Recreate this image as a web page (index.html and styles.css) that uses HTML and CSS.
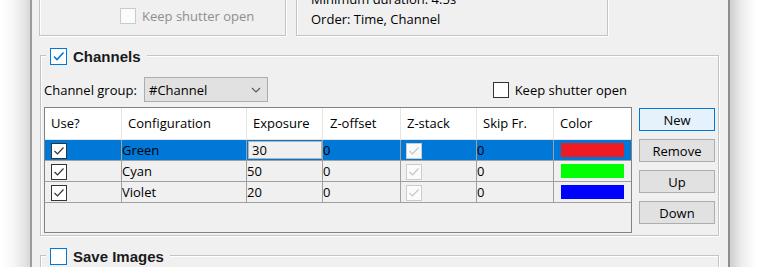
FILE: index.html
```html
<!DOCTYPE html>
<html lang="en">
<head>
  <meta charset="UTF-8">
  <title>Multi-D Acquisition</title>
  <link rel="stylesheet" href="styles.css">
</head>
<body>
  <div class="window">
    <div class="top-row">
      <div class="etched box-left">
        <label class="check-row disabled">
          <span class="cb cb-disabled"></span>Keep shutter open
        </label>
      </div>
      <div class="etched box-right">
        <div>Minimum duration: 4.5s</div>
        <div>Order: Time, Channel</div>
      </div>
    </div>

    <div class="etched group channels">
      <div class="group-title">
        <span class="cb cb-focus"><svg viewBox="0 0 13 13"><polyline points="2,6.5 5,9.5 11.5,2.5"/></svg></span>Channels
      </div>
      <div class="channels-grid">
        <div class="combo-row">
          <span class="combo-label">Channel group:</span>
          <div class="combo">
            <span>#Channel</span>
            <svg class="chevron" viewBox="0 0 10 6"><polyline points="1,1 5,5 9,1"/></svg>
          </div>
          <label class="check-row keep">
            <span class="cb"></span>Keep shutter open
          </label>
        </div>

        <div class="table">
          <div class="tr th">
            <div>Use?</div>
            <div>Configuration</div>
            <div>Exposure</div>
            <div class="zo">Z-offset</div>
            <div>Z-stack</div>
            <div>Skip Fr.</div>
            <div>Color</div>
          </div>
          <div class="tr td selected">
            <div class="c-use"><span class="cb"><svg viewBox="0 0 12 12"><polyline points="1.5,6 4.5,9 10.5,2.5"/></svg></span></div>
            <div class="c-text">Green</div>
            <div class="c-edit"><span class="edit">30</span></div>
            <div class="c-text">0</div>
            <div class="c-stack"><span class="cb cb-disabled"><svg viewBox="0 0 12 12"><polyline points="1.5,6 4.5,9 10.5,2.5"/></svg></span></div>
            <div class="c-text">0</div>
            <div class="c-color"><span class="swatch red"></span></div>
          </div>
          <div class="tr td">
            <div class="c-use"><span class="cb"><svg viewBox="0 0 12 12"><polyline points="1.5,6 4.5,9 10.5,2.5"/></svg></span></div>
            <div class="c-text">Cyan</div>
            <div class="c-text">50</div>
            <div class="c-text">0</div>
            <div class="c-stack"><span class="cb cb-disabled"><svg viewBox="0 0 12 12"><polyline points="1.5,6 4.5,9 10.5,2.5"/></svg></span></div>
            <div class="c-text">0</div>
            <div class="c-color"><span class="swatch green"></span></div>
          </div>
          <div class="tr td">
            <div class="c-use"><span class="cb"><svg viewBox="0 0 12 12"><polyline points="1.5,6 4.5,9 10.5,2.5"/></svg></span></div>
            <div class="c-text">Violet</div>
            <div class="c-text">20</div>
            <div class="c-text">0</div>
            <div class="c-stack"><span class="cb cb-disabled"><svg viewBox="0 0 12 12"><polyline points="1.5,6 4.5,9 10.5,2.5"/></svg></span></div>
            <div class="c-text">0</div>
            <div class="c-color"><span class="swatch blue"></span></div>
          </div>
        </div>

        <div class="buttons">
          <button class="btn btn-default">New</button>
          <button class="btn">Remove</button>
          <button class="btn">Up</button>
          <button class="btn">Down</button>
        </div>
      </div>
    </div>

    <div class="etched group save">
      <div class="group-title">
        <span class="cb cb-focus"></span>Save Images
      </div>
    </div>
  </div>
</body>
</html>
```

FILE: styles.css
```css
* {
  box-sizing: border-box;
}
body {
  margin: 0;
  height: 267px;
  overflow: hidden;
  font-family: "Open Sans", sans-serif;
  font-size: 13px;
  color: #000;
  background: linear-gradient(to right, #fff 0, #f8f8f8 12px, #e6e6e6 24px, #d8d8d8 30px,
    #d8d8d8 730px, #d0d0d0 731px, #ececec 741px, #fff 756px);
}
.window {
  margin-left: 30px;
  width: 700px;
  height: 267px;
  border-left: 2px solid #9c9c9c;
  border-right: 2px solid #8e8e8e;
  background: #f0f0f0;
  padding-left: 7px;
  overflow: hidden;
}
.etched {
  border: 1px solid #c4c4c4;
  box-shadow: inset 1px 1px 0 #fff, 1px 1px 0 #fff;
}

/* top row, mostly scrolled out of view */
.top-row {
  display: flex;
  gap: 10px;
  margin-top: -30px;
  height: 66px;
}
.box-left {
  width: 247px;
  display: flex;
  align-items: flex-end;
  padding: 0 0 11px 80px;
}
.box-right {
  width: 312px;
  display: flex;
  flex-direction: column;
  justify-content: flex-end;
  padding: 0 0 6px 14px;
  line-height: 20px;
}
.check-row {
  display: flex;
  align-items: center;
  gap: 6px;
  height: 16px;
  white-space: nowrap;
}
.check-row.disabled {
  color: #8e8e8e;
}

/* checkboxes */
.cb {
  width: 16px;
  height: 16px;
  flex: none;
  border: 1px solid #333;
  background: #fff;
  display: inline-flex;
  align-items: center;
  justify-content: center;
}
.cb svg {
  width: 12px;
  height: 12px;
  fill: none;
  stroke: #333;
  stroke-width: 1.2;
}
.cb-disabled {
  border-color: #cccccc;
  background: #fbfbfb;
}
.cb-disabled svg {
  stroke: #c6c6c6;
}
.cb-focus {
  width: 17px;
  height: 17px;
  border-color: #0078d7;
}
.cb-focus svg {
  width: 13px;
  height: 13px;
  stroke: #0078d7;
  stroke-width: 1.6;
}

/* group boxes */
.group {
  margin-left: 1px;
  width: 679px;
  padding: 0 3px 2px 3px;
}
.group-title {
  display: flex;
  align-items: center;
  gap: 6px;
  width: fit-content;
  height: 20px;
  margin: -10px 0 0 2px;
  padding: 0 6px 0 4px;
  background: #f0f0f0;
  font-family: "Liberation Sans", Arial, sans-serif;
  font-weight: 700;
  font-size: 15px;
  color: #1a1a1a;
}
.channels {
  margin-top: 19px;
  height: 181px;
}
.save {
  margin-top: 19px;
  height: 40px;
}
.channels-grid {
  display: grid;
  grid-template-columns: 588px 76px;
  column-gap: 7px;
  margin-top: 11px;
}

/* channel group row */
.combo-row {
  grid-column: 1;
  grid-row: 1;
  display: flex;
  align-items: center;
  height: 25px;
  margin-bottom: 5px;
}
.combo-label {
  width: 100px;
}
.combo {
  width: 124px;
  height: 25px;
  display: flex;
  align-items: center;
  justify-content: space-between;
  padding: 0 6px 0 4px;
  background: #e1e1e1;
  border: 1px solid #adadad;
}
.chevron {
  width: 10px;
  height: 6px;
  fill: none;
  stroke: #555;
  stroke-width: 1.1;
}
.keep {
  margin-left: auto;
  margin-right: 5px;
}

/* table */
.table {
  grid-column: 1;
  grid-row: 2;
  height: 126px;
  border: 1px solid #828282;
  background: #f0f0f0;
}
.tr {
  display: grid;
  grid-template-columns: 77px 125px 76px 78px 76px 77px 77px;
}
.tr > div {
  border-right: 1px solid #a0a0a0;
  white-space: nowrap;
  overflow: hidden;
}
.tr > div:last-child {
  border-right: none;
}
.th {
  height: 32px;
  background: #fff;
  border-bottom: 1px solid #e5e5e5;
}
.th > div {
  border-right-color: #e5e5e5;
  line-height: 31px;
  padding-left: 6px;
}
.th > .zo {
  padding-left: 7px;
}
.td {
  height: 21px;
  border-bottom: 1px solid #a0a0a0;
}
.td > div {
  height: 20px;
  line-height: 20px;
}
.td.selected {
  background: #0078d7;
}
.c-text {
  padding-left: 0;
}
.c-use {
  padding: 2px 0 0 6px;
}
.c-stack {
  padding: 2px 0 0 5px;
}
.c-edit {
  padding: 1px 0 1px 1px;
}
.edit {
  display: block;
  height: 18px;
  line-height: 16px;
  padding-left: 3px;
  background: #f0f0f0;
  border: 1px solid #b4b4b4;
}
.c-color {
  padding: 3px 0 0 7px;
}
.swatch {
  display: block;
  width: 63px;
  height: 14px;
}
.red { background: #ed1c24; }
.green { background: #00ff00; }
.blue { background: #0000ff; }

/* side buttons */
.buttons {
  grid-column: 2;
  grid-row: 2;
  display: flex;
  flex-direction: column;
  gap: 8px;
  padding-top: 1px;
}
.btn {
  width: 76px;
  height: 23px;
  padding: 0;
  font-family: inherit;
  font-size: 13px;
  color: #000;
  background: #e1e1e1;
  border: 1px solid #adadad;
}
.btn-default {
  background: #e5f1fb;
  border-color: #0078d7;
}
```
